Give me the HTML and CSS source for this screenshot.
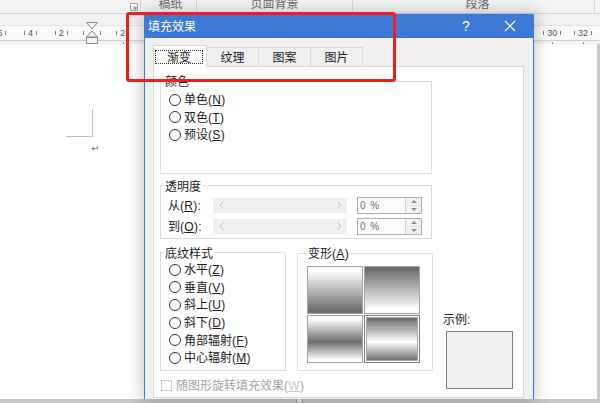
FILE: index.html
```html
<!DOCTYPE html>
<html lang="zh-CN">
<head>
<meta charset="utf-8">
<title>填充效果</title>
<link rel="stylesheet" href="styles.css">
</head>
<body>
<div class="screen">
  <div class="ribbon">
    <div class="rg g0">
      <svg class="launcher" width="8" height="8" viewBox="0 0 8 8"><path d="M0.5 0.5H7.5V7.5H0.5Z" fill="#fff" stroke="#9a9a9a"/><path d="M3 3L6 6M6 3.5V6H3.5" fill="none" stroke="#777"/></svg>
    </div>
    <div class="rg g1"><span class="rl">稿纸</span></div>
    <div class="rg g2"><span class="rl">页面背景</span></div>
    <div class="rg g3"><span class="rl">段落</span></div>
    <div class="rg g4"></div>
  </div>

  <div class="ruler">
    <div class="strip">
      <span class="cell"><i class="tk"></i><b>6</b><i class="tk"></i></span>
      <span class="cell"><i class="tk"></i><b>4</b><i class="tk"></i></span>
      <span class="cell"><i class="tk"></i><b>2</b><i class="tk"></i></span>
      <span class="cell"><i class="tk"></i><b class="gapn"></b><i class="tk"></i></span>
      <span class="cell t"><i class="tk"></i><b>2</b><i class="tk"></i></span>
      <span class="cell t"><i class="tk"></i><b>4</b><i class="tk"></i></span>
      <span class="cell t"><i class="tk"></i><b>6</b><i class="tk"></i></span>
      <span class="cell t"><i class="tk"></i><b>8</b><i class="tk"></i></span>
      <span class="cell t"><i class="tk"></i><b>10</b><i class="tk"></i></span>
      <span class="cell t"><i class="tk"></i><b>12</b><i class="tk"></i></span>
      <span class="cell t"><i class="tk"></i><b>14</b><i class="tk"></i></span>
      <span class="cell t"><i class="tk"></i><b>16</b><i class="tk"></i></span>
      <span class="cell t"><i class="tk"></i><b>18</b><i class="tk"></i></span>
      <span class="cell t"><i class="tk"></i><b>20</b><i class="tk"></i></span>
      <span class="cell t"><i class="tk"></i><b>22</b><i class="tk"></i></span>
      <span class="cell t"><i class="tk"></i><b>24</b><i class="tk"></i></span>
      <span class="cell t"><i class="tk"></i><b>26</b><i class="tk"></i></span>
      <span class="cell t"><i class="tk"></i><b>28</b><i class="tk"></i></span>
      <span class="cell t"><i class="tk"></i><b>30</b><i class="tk"></i></span>
      <span class="cell t"><i class="tk"></i><b>32</b><i class="tk"></i></span>
      <span class="cell t"><i class="tk"></i><b>34</b><i class="tk"></i></span>
    </div>
    <svg class="indent" width="12" height="22" viewBox="0 0 12 22">
      <path d="M0.5 0.5H11.5L6 7Z" fill="#f4f4f4" stroke="#8c8c8c"/>
      <path d="M6 9L11.5 15H0.5Z" fill="#f4f4f4" stroke="#8c8c8c"/>
      <rect x="0.5" y="15.5" width="11" height="6" fill="#f4f4f4" stroke="#8c8c8c"/>
    </svg>
  </div>

  <div class="pagearea">
    <div class="doc">
      <div class="crop"></div>
      <div class="ret">↵</div>
    </div>
    <div class="vscroll"></div>
  </div>

  <div class="status"><span class="dot"></span></div>

  <div class="dialog">
    <div class="titlebar">
      <span class="ttl">填充效果</span>
      <span class="help">?</span>
      <span class="close"><svg width="12" height="12" viewBox="0 0 12 12"><path d="M1 1L11 11M11 1L1 11" stroke="#fff" stroke-width="1.2"/></svg></span>
    </div>
    <div class="dbody">
      <div class="tabs">
        <div class="tab on"><span class="focus">渐变</span></div>
        <div class="tab">纹理</div>
        <div class="tab">图案</div>
        <div class="tab">图片</div>
      </div>
      <div class="panel">
        <fieldset class="fs-color">
          <legend>颜色</legend>
          <div class="radios">
            <div class="radio"><span class="rb"></span><span>单色<span class="lt">(<u>N</u>)</span></span></div>
            <div class="radio"><span class="rb"></span><span>双色<span class="lt">(<u>T</u>)</span></span></div>
            <div class="radio"><span class="rb"></span><span>预设<span class="lt">(<u>S</u>)</span></span></div>
          </div>
        </fieldset>

        <fieldset class="fs-alpha">
          <legend>透明度</legend>
          <div class="arow">
            <span class="alab">从<span class="lt">(<u>R</u>):</span></span>
            <span class="slider">
              <svg width="5" height="8" viewBox="0 0 5 8"><path d="M4.5 0.5L1 4L4.5 7.5" fill="none" stroke="#bdbdbd"/></svg>
              <svg width="5" height="8" viewBox="0 0 5 8"><path d="M0.5 0.5L4 4L0.5 7.5" fill="none" stroke="#bdbdbd"/></svg>
            </span>
            <span class="spin"><span class="val">0 %</span><span class="btns"><span class="up"></span><span class="dn"></span></span></span>
          </div>
          <div class="arow">
            <span class="alab">到<span class="lt">(<u>O</u>):</span></span>
            <span class="slider">
              <svg width="5" height="8" viewBox="0 0 5 8"><path d="M4.5 0.5L1 4L4.5 7.5" fill="none" stroke="#bdbdbd"/></svg>
              <svg width="5" height="8" viewBox="0 0 5 8"><path d="M0.5 0.5L4 4L0.5 7.5" fill="none" stroke="#bdbdbd"/></svg>
            </span>
            <span class="spin"><span class="val">0 %</span><span class="btns"><span class="up"></span><span class="dn"></span></span></span>
          </div>
        </fieldset>

        <div class="bottom">
          <div class="bleft">
            <div class="brow">
              <fieldset class="fs-shade">
                <legend>底纹样式</legend>
                <div class="radios">
                  <div class="radio r2"><span class="rb"></span><span>水平<span class="lt">(<u>Z</u>)</span></span></div>
                  <div class="radio r2"><span class="rb"></span><span>垂直<span class="lt">(<u>V</u>)</span></span></div>
                  <div class="radio r2"><span class="rb"></span><span>斜上<span class="lt">(<u>U</u>)</span></span></div>
                  <div class="radio r2"><span class="rb"></span><span>斜下<span class="lt">(<u>D</u>)</span></span></div>
                  <div class="radio r2"><span class="rb"></span><span>角部辐射<span class="lt">(<u>F</u>)</span></span></div>
                  <div class="radio r2"><span class="rb"></span><span>中心辐射<span class="lt">(<u>M</u>)</span></span></div>
                </div>
              </fieldset>
              <fieldset class="fs-var">
                <legend>变形<span class="lt">(<u>A</u>)</span></legend>
                <div class="tiles">
                  <span class="tile v1"></span>
                  <span class="tile v2"></span>
                  <span class="tile v3"></span>
                  <span class="tile v4"></span>
                </div>
              </fieldset>
            </div>
            <div class="check"><span class="cb"></span><span>随图形旋转填充效果<span class="lt">(<u class="dim">W</u>)</span></span></div>
          </div>
          <div class="sample-col">
            <div class="slabel">示例<span class="lt">:</span></div>
            <div class="sample"></div>
          </div>
        </div>
      </div>
    </div>
  </div>

  <div class="annot"></div>
</div>
</body>
</html>
```

FILE: styles.css
```css
* { box-sizing: border-box; }
html, body { margin: 0; padding: 0; }
body {
  width: 600px; height: 403px; overflow: hidden; background: #fff;
  font-family: "Noto Sans CJK SC", sans-serif;
  font-size: 12px; color: #1b1b1b;
  text-autospace: no-autospace;
}
.lt { font-family: "Liberation Sans", sans-serif; font-size: 12px; letter-spacing: 0.3px; }
.screen { position: relative; width: 600px; height: 403px; display: flex; flex-direction: column; overflow: hidden; }

/* ribbon */
.ribbon { height: 14px; flex: none; display: flex; background: #f3f3f3; border-bottom: 1px solid #d4d4d4; overflow: hidden; }
.rg { border-right: 1px solid #d6d6d6; display: flex; justify-content: center; flex: none; }
.g0 { width: 141px; justify-content: flex-end; padding: 3px 2px 0 0; }
.g1 { width: 56px; padding-left: 4px; }
.g2 { width: 156px; }
.g3 { width: 242px; padding-left: 8px; }
.g4 { flex: 1; border-right: none; }
.rl { font-size: 12px; line-height: 12px; margin-top: -3px; color: #6a6a6a; }

/* ruler */
.ruler { height: 30px; flex: none; background: #f1f1f1; padding-top: 11px; position: relative; overflow: hidden; }
.strip { height: 16px; width: 700px; margin-left: -15.45px; display: flex; background: #fafafa; border-top: 1px solid #e3e3e3; border-bottom: 1px solid #d0d0d0; }
.cell { width: 30.7px; flex: none; display: flex; justify-content: center; align-items: center; gap: 3px; position: relative;
  font: 9px/1 "Liberation Sans", sans-serif; color: #505050; }
.cell b { font-weight: normal; }
.cell .gapn { width: 10px; }
.tk { width: 1px; height: 4px; background: #808080; }
.cell.t::after { content: ""; position: absolute; left: 50%; bottom: -5px; width: 1px; height: 3px; background: #888; }
.indent { position: absolute; left: 86px; top: 8px; }

/* page */
.pagearea { flex: 1; display: flex; min-height: 0; }
.doc { flex: 1; background: #fff; }
.crop { width: 27px; height: 28px; margin: 65px 0 0 66px; border-right: 1px solid #c2c2c2; border-bottom: 1px solid #c2c2c2; }
.ret { margin: 7px 0 0 91px; font: 10px/10px "DejaVu Sans", sans-serif; color: #6d6d6d; }
.vscroll { width: 3px; background: #c8c8c8; }
.status { height: 4px; flex: none; background: #c6c6c6; position: relative; }
.dot { display: block; width: 7px; height: 7px; margin: -2px 0 0 296px; border: 1px solid #8a8a8a; border-radius: 50%; background: #e6e6e6; }

/* dialog */
.dialog {
  position: absolute; left: 144px; top: 14px; width: 390px; height: 385px;
  background: #f0f0f0; border-left: 1px solid #3d7ad5; border-right: 1px solid #3d7ad5;
  box-shadow: 0 0 14px 2px rgba(0,0,0,0.22);
  display: flex; flex-direction: column;
}
.titlebar { height: 24px; flex: none; background: #3d7ad5; color: #fff; display: flex; align-items: center; }
.ttl { flex: 1; padding-left: 3px; font-size: 12px; line-height: 14px; }
.help { width: 30px; margin-right: 6px; text-align: center; font: 14px/14px "Liberation Sans", sans-serif; }
.close { width: 46px; display: flex; justify-content: center; align-items: center; }

.dbody { flex: 1; padding: 7px 9px 0 8px; display: flex; flex-direction: column; }
.tabs { height: 22px; flex: none; display: flex; align-items: flex-end; margin-bottom: -1px; position: relative; z-index: 1; }
.tab { width: 53px; height: 19px; margin: 0 0 1px -1px; border: 1px solid #d9d9d9; border-bottom: none; background: #f0f0f0;
  display: flex; align-items: center; justify-content: center; line-height: 14px; }
.tab.on { width: 54px; height: 22px; margin: 0; background: #fff; }
.focus { border: 1px dotted #333; padding: 0 11px; height: 14px; line-height: 12px; margin-right: 2px; }

.panel { height: 332px; flex: none; background: #fff; border: 1px solid #d9d9d9; padding: 0 0 0 6px; }

fieldset { margin: 0; border: 1px solid #dcdcdc; padding: 0 0 0 3px; min-width: 0; }
legend { padding: 0 1px; font-size: 12px; line-height: 14px; }
.radios { padding-left: 5px; }
.radio { display: flex; align-items: center; gap: 3px; height: 17.5px; line-height: 14px; }
.radio.r2 { height: 17.6px; }
.rb { width: 12px; height: 12px; flex: none; border: 1px solid #333; border-radius: 50%; background: #fff; }
u { text-decoration: underline; text-underline-offset: 1px; }

.fs-color { width: 272px; margin-top: 7px; padding-top: 3px; padding-bottom: 29px; }
.fs-alpha { width: 272px; margin-top: 5px; padding: 4px 0 3px 3px; }
.arow { display: flex; align-items: center; height: 17px; padding-left: 4px; }
.arow + .arow { margin-top: 4px; }
.alab { width: 45px; line-height: 14px; }
.slider { width: 134px; height: 15px; margin-right: 10px; background: #efefef; display: flex; align-items: center; justify-content: space-between; padding: 0 5px 0 6px; }
.spin { width: 65px; height: 17px; border: 1px solid #adadad; background: #fbfbfb; display: flex; }
.val { flex: 1; padding-left: 2px; font: 10px/15px "Liberation Sans", sans-serif; color: #6e6e6e; word-spacing: 2px; }
.btns { width: 16px; border-left: 1px solid #d4d4d4; background: #f3f3f3; display: flex; flex-direction: column; }
.btns span { flex: 1; display: flex; align-items: center; justify-content: center; }
.btns .dn { border-top: 1px solid #e1e1e1; }
.up::before { content: ""; border-left: 3px solid transparent; border-right: 3px solid transparent; border-bottom: 3px solid #8c8c8c; }
.dn::before { content: ""; border-left: 3px solid transparent; border-right: 3px solid transparent; border-top: 3px solid #8c8c8c; }

.bottom { display: flex; margin-top: 7px; }
.bleft { display: flex; flex-direction: column; }
.brow { display: flex; gap: 11px; }
.fs-shade { width: 126px; padding: 1.5px 0 2px 3px; }
.fs-var { width: 136px; padding: 5px 0 7px 9px; }
.tiles { display: grid; grid-template-columns: 56px 56px; grid-template-rows: 48px 48px; gap: 1px; }
.tile { border: 1px solid #a2a2a2; }
.v1 { background: linear-gradient(#ffffff 8%, #6c6c6c 96%); }
.v2 { background: linear-gradient(#6c6c6c 4%, #ffffff 92%); }
.v3 { background: linear-gradient(#ffffff 6%, #6e6e6e 56%, #ffffff 96%); }
.v4 { background: linear-gradient(#6a6a6a 4%, #ffffff 56%, #6a6a6a 98%); border-color: #7e7e7e; box-shadow: inset 0 0 0 1px #fff, inset 0 0 0 2px #a8a8a8; }

.check { display: flex; align-items: center; gap: 4px; height: 13px; margin-top: 8px; padding-left: 1px; color: #a4a4a4; line-height: 14px; }
.cb { width: 11px; height: 11px; flex: none; border: 1px solid #c6c6c6; background: #fff; }
.dim { color: #c4c4c4; }
.sample-col { margin-left: 10px; padding-top: 66px; }
.slabel { line-height: 14px; }
.sample { width: 67px; height: 58px; margin: 4px 0 0 3px; background: #f0f0f0; border: 1px solid #7f7f7f; }

/* red annotation */
.annot { position: absolute; left: 126px; top: 12px; width: 270px; height: 70px; border: 3px solid #f31b1b; border-radius: 3px; z-index: 5; }
```
